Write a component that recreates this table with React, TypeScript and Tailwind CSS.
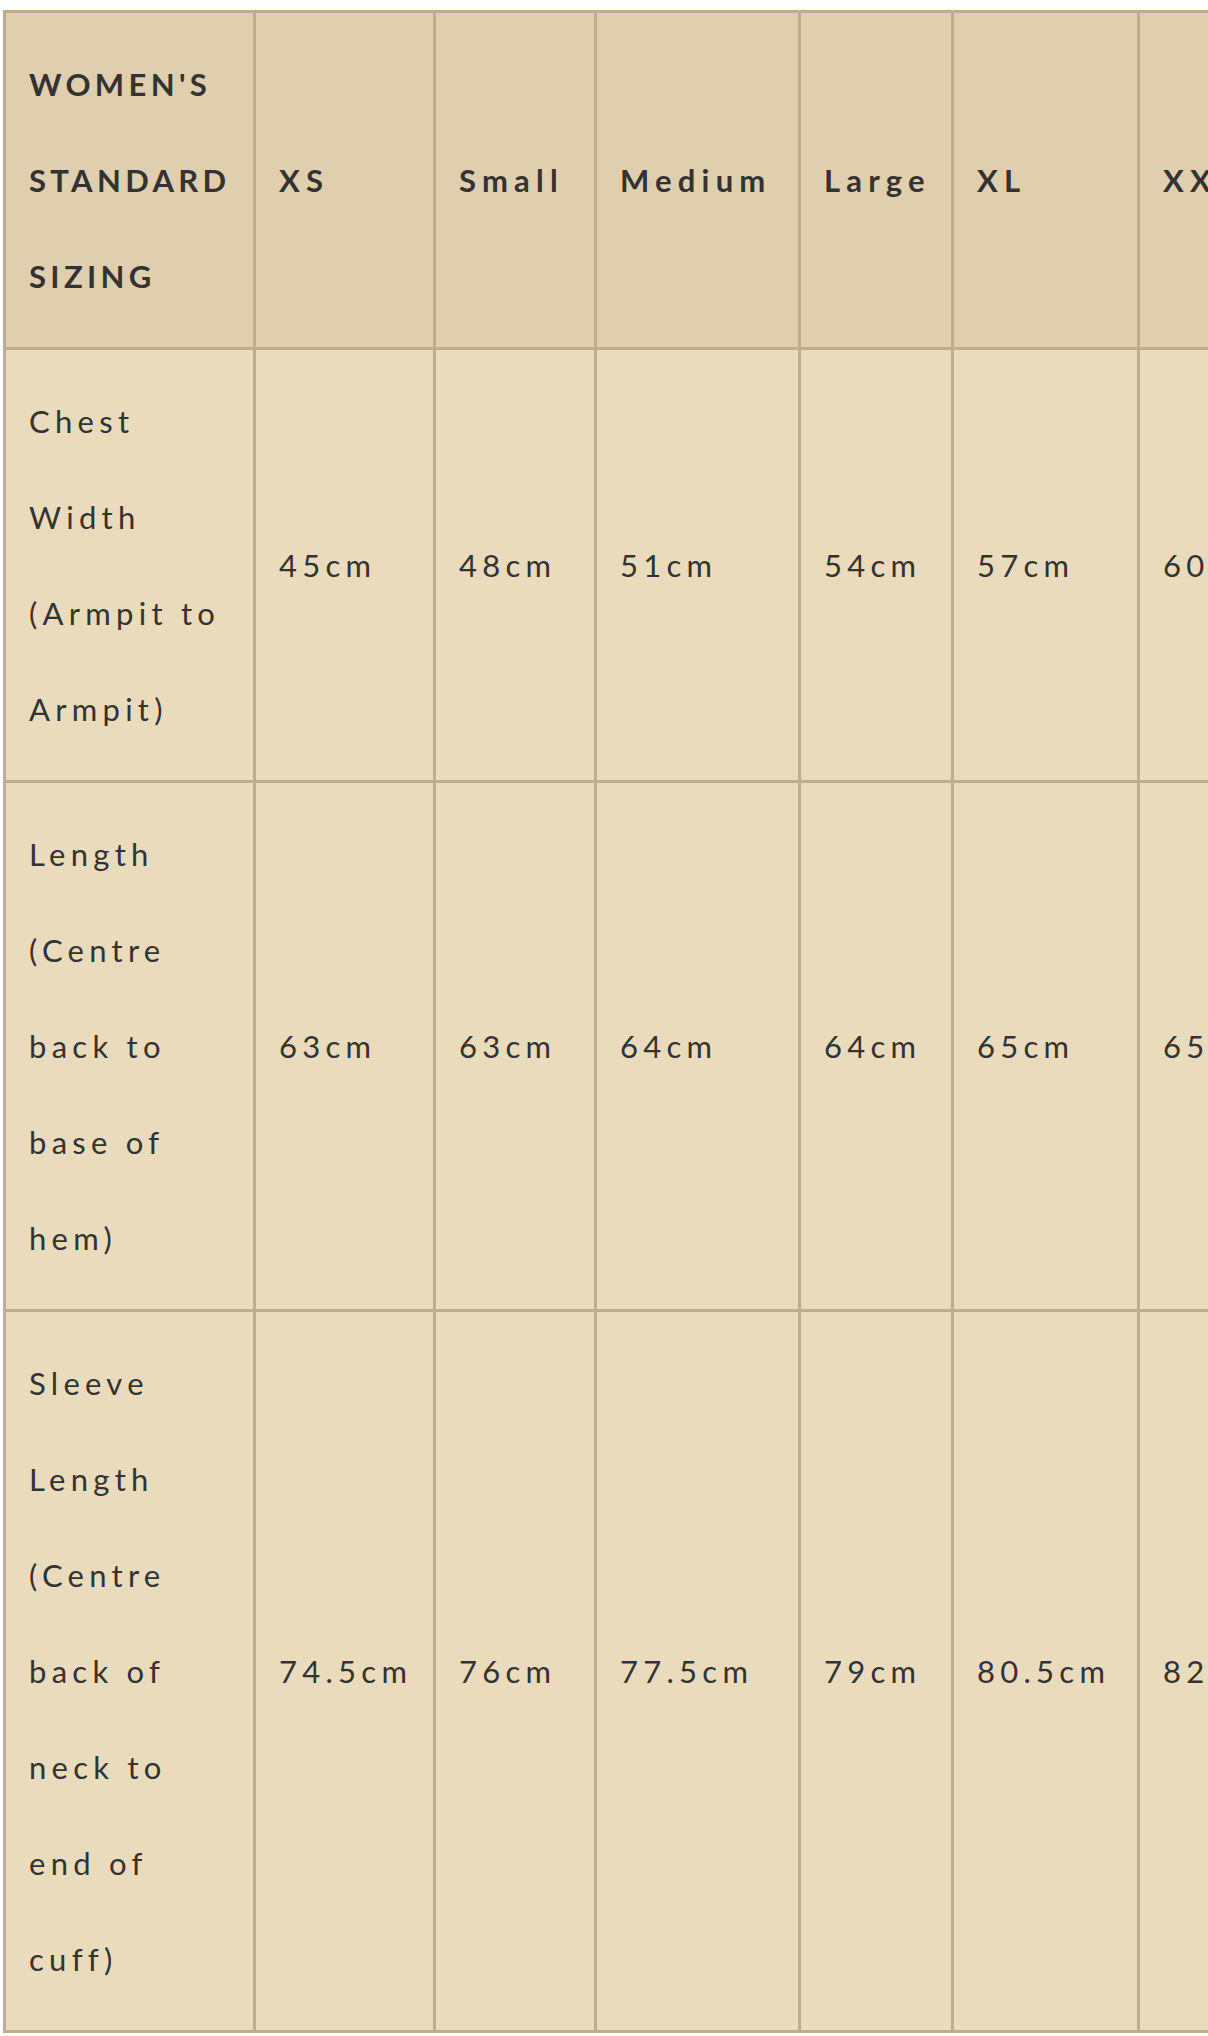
import { Fragment } from 'react';

interface SizeRow {
  label: string[];
  values: string[];
}

const sizes = ['XS', 'Small', 'Medium', 'Large', 'XL', 'XXL'];

const rows: SizeRow[] = [
  {
    label: ['Chest', 'Width', '(Armpit to', 'Armpit)'],
    values: ['45cm', '48cm', '51cm', '54cm', '57cm', '60cm']
  },
  {
    label: ['Length', '(Centre', 'back to', 'base of', 'hem)'],
    values: ['63cm', '63cm', '64cm', '64cm', '65cm', '65cm']
  },
  {
    label: ['Sleeve', 'Length', '(Centre', 'back of', 'neck to', 'end of', 'cuff)'],
    values: ['74.5cm', '76cm', '77.5cm', '79cm', '80.5cm', '82cm']
  }
];

const cell = 'border-r-[3px] border-b-[3px] border-[#bfae8d] px-[23px] py-[23px] leading-[96px] whitespace-nowrap';

export default function App() {
  return (
    <div className="w-full overflow-hidden bg-white pt-[10px] pl-[3px] text-[#333333] font-['Lato',sans-serif] text-[31px] tracking-[0.17em]">
      <div
        role="table"
        className="grid w-max grid-cols-[250px_180px_161px_204px_153px_186px_180px] border-l-[3px] border-t-[3px] border-[#bfae8d]"
      >
        <div role="columnheader" className={`${cell} bg-[#dfcfae] font-bold tracking-[0.14em]`}>
          <div>WOMEN'S</div>
          <div>STANDARD</div>
          <div>SIZING</div>
        </div>
        {sizes.map((size) => (
          <div key={size} role="columnheader" className={`${cell} flex items-center bg-[#dfcfae] font-bold tracking-[0.2em]`}>
            {size}
          </div>
        ))}

        {rows.map((row) => (
          <Fragment key={row.label[0] + row.label[1]}>
            <div role="rowheader" className={`${cell} bg-[#e9dbbb]`}>
              {row.label.map((line) => (
                <div key={line}>{line}</div>
              ))}
            </div>
            {row.values.map((value, i) => (
              <div key={i} role="cell" className={`${cell} flex items-center bg-[#e9dbbb]`}>
                {value}
              </div>
            ))}
          </Fragment>
        ))}
      </div>
    </div>
  );
}
